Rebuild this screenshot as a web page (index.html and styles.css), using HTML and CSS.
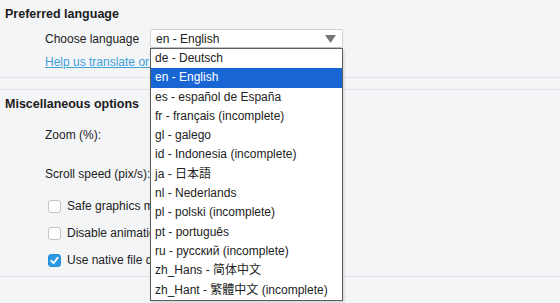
FILE: index.html
```html
<!DOCTYPE html>
<html>
<head>
<meta charset="utf-8">
<link rel="stylesheet" href="styles.css">
</head>
<body>
<section class="sect sect-lang">
  <h2 class="sect-title">Preferred language</h2>
  <div class="row row-lang">
    <span class="row-label">Choose language</span>
    <div class="select-wrap">
      <div class="select">
        <span class="select-value">en - English</span>
        <svg class="select-arrow" width="11" height="8" viewBox="0 0 11 8"><path d="M0 0 H11 L5.5 8 Z" fill="#777"/></svg>
      </div>
      <ul class="options">
        <li>de - Deutsch</li>
        <li class="selected">en - English</li>
        <li>es - español de España</li>
        <li>fr - français (incomplete)</li>
        <li>gl - galego</li>
        <li>id - Indonesia (incomplete)</li>
        <li lang="ja">ja - 日本語</li>
        <li>nl - Nederlands</li>
        <li>pl - polski (incomplete)</li>
        <li>pt - português</li>
        <li>ru - русский (incomplete)</li>
        <li lang="zh-Hans">zh_Hans - 简体中文</li>
        <li lang="zh-Hant">zh_Hant - 繁體中文 (incomplete)</li>
      </ul>
    </div>
  </div>
  <div class="row row-link">
    <a class="link" href="#">Help us translate or improve translations</a>
  </div>
</section>
<section class="sect sect-misc">
  <h2 class="sect-title">Miscellaneous options</h2>
  <div class="row row-field row-zoom"><span class="row-label">Zoom (%):</span></div>
  <div class="row row-field row-scroll"><span class="row-label">Scroll speed (pix/s):</span></div>
  <div class="checks">
    <label class="check"><span class="box"></span><span>Safe graphics mode</span></label>
    <label class="check"><span class="box"></span><span>Disable animations</span></label>
    <label class="check"><span class="box box-on"><svg width="13" height="13" viewBox="0 0 13 13"><path d="M3.3 6.8 L5.5 9.2 L9.8 3.6" fill="none" stroke="#fff" stroke-width="1.8" stroke-linecap="round" stroke-linejoin="round"/></svg></span><span>Use native file dialogs</span></label>
  </div>
</section>
</body>
</html>
```

FILE: styles.css
```css
html, body {
  margin: 0;
  padding: 0;
  background: #f4f5f7;
  font-family: "Liberation Sans", Arial, "Noto Sans CJK JP", sans-serif;
  font-size: 12px;
  color: #222;
  overflow: hidden;
  height: 303px;
}

.sect {
  border-bottom: 1px solid #e0e2e5;
}

.sect-lang {
  padding: 6px 0 7px 0;
}

.sect-misc {
  margin-top: 11px;
  border-top: 1px solid #e0e2e5;
  padding: 6px 0 6px 0;
}

.sect-title {
  margin: 0 0 0 5px;
  font-size: 12.5px;
  font-weight: bold;
  line-height: 16px;
  color: #1c1c1c;
}

.row {
  display: flex;
  align-items: center;
  padding-left: 45px;
}

.row-lang {
  margin-top: 7px;
  height: 19px;
}

.row-label {
  min-width: 105px;
  flex-shrink: 0;
  white-space: nowrap;
  line-height: 16px;
}

.select-wrap {
  position: relative;
}

.select {
  box-sizing: border-box;
  width: 193px;
  height: 19px;
  border: 1px solid #cfd1d4;
  border-bottom-color: #bdbfc2;
  border-radius: 2px;
  background: #fff;
  display: flex;
  align-items: center;
  justify-content: space-between;
  padding: 0 6px 0 5px;
}

.select-value {
  line-height: 16px;
}

.select-arrow {
  display: block;
  margin-top: 1px;
}

.options {
  position: absolute;
  top: 19px;
  left: 0;
  box-sizing: border-box;
  width: 193px;
  margin: 0;
  padding: 0;
  list-style: none;
  background: #fff;
  border: 1px solid #5e5e5e;
  box-shadow: 1px 2px 3px rgba(0,0,0,0.15);
  z-index: 5;
}

.options li {
  height: 19.3px;
  line-height: 19.3px;
  padding-left: 4px;
  white-space: nowrap;
  color: #222;
}

.options li:lang(ja) {
  font-family: "Liberation Sans", "Noto Sans CJK JP", sans-serif;
}
.options li:lang(zh-Hans) {
  font-family: "Liberation Sans", "Noto Sans CJK SC", sans-serif;
}
.options li:lang(zh-Hant) {
  font-family: "Liberation Sans", "Noto Sans CJK TC", sans-serif;
}

.options li.selected {
  background: #1866d4;
  color: #fff;
}

.row-link {
  margin-top: 6px;
  height: 16px;
}

.link {
  color: #3f9fd8;
  text-decoration: underline;
  white-space: nowrap;
  line-height: 16px;
}

.row-field {
  height: 20px;
}

.row-zoom {
  margin-top: 13px;
}

.row-scroll {
  margin-top: 19px;
}

.checks {
  margin-top: 12px;
  display: flex;
  flex-direction: column;
  gap: 7px;
}

.check {
  display: flex;
  align-items: center;
  height: 20px;
  padding-left: 48px;
  gap: 6px;
  white-space: nowrap;
}

.box {
  box-sizing: border-box;
  width: 13px;
  height: 13px;
  border: 1px solid #c2c4c7;
  border-radius: 3px;
  background: #fff;
  display: flex;
  align-items: center;
  justify-content: center;
}

.box-on {
  background: #2b98df;
  border-color: #2590d8;
}

.box-on svg {
  display: block;
  margin: -1px;
}
```
